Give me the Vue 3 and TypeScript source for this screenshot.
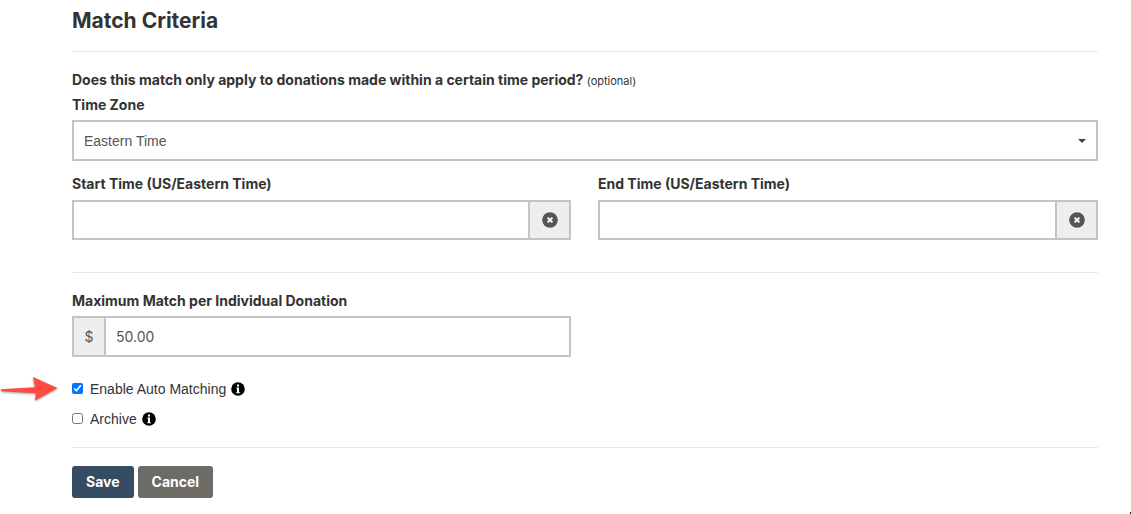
<script setup lang="ts">
import { ref } from 'vue'

const timeZone = ref('Eastern Time')
const startTime = ref('')
const endTime = ref('')
const maximum = ref('50.00')
const autoMatching = ref(true)
const archived = ref(false)
</script>

<template>
  <form class="criteria" @submit.prevent>
    <h2 class="title">Match Criteria</h2>
    <hr />

    <section class="period">
      <p class="question">
        Does this match only apply to donations made within a certain time period?
        <small>(optional)</small>
      </p>
      <label class="label" for="zone">Time Zone</label>
      <div class="control select-control">
        <select id="zone" v-model="timeZone">
          <option>Eastern Time</option>
          <option>Central Time</option>
          <option>Mountain Time</option>
          <option>Pacific Time</option>
        </select>
        <svg class="caret" viewBox="0 0 8 4" aria-hidden="true"><path d="M0 0h8L4 4z" /></svg>
      </div>

      <div class="columns">
        <div>
          <label class="label" for="start">Start Time (US/Eastern Time)</label>
          <div class="control date-control">
            <input id="start" v-model="startTime" type="text" />
            <button class="clear" type="button" aria-label="Clear start time" @click="startTime = ''">
              <svg viewBox="0 0 16 16"><circle cx="8" cy="8" r="7.8" /><path d="M5.600 5.600l4.800 4.800M10.400 5.600l-4.800 4.800" /></svg>
            </button>
          </div>
        </div>
        <div>
          <label class="label" for="end">End Time (US/Eastern Time)</label>
          <div class="control date-control">
            <input id="end" v-model="endTime" type="text" />
            <button class="clear" type="button" aria-label="Clear end time" @click="endTime = ''">
              <svg viewBox="0 0 16 16"><circle cx="8" cy="8" r="7.8" /><path d="M5.600 5.600l4.800 4.800M10.400 5.600l-4.800 4.800" /></svg>
            </button>
          </div>
        </div>
      </div>
    </section>
    <hr />

    <section class="limits">
      <div class="columns">
        <div>
          <label class="label" for="maximum">Maximum Match per Individual Donation</label>
          <div class="control">
            <span class="currency">$</span>
            <input id="maximum" v-model="maximum" type="text" />
          </div>
        </div>
      </div>

      <div class="check">
        <svg class="arrow" viewBox="0 0 60 32" aria-hidden="true">
          <path d="M1 14.300L35 12.200 33 2 57.500 13 35 25.500 36 18.300 2 16.200Q0 15.400 1 14.300z" />
        </svg>
        <label><input v-model="autoMatching" type="checkbox" />Enable Auto Matching</label>
        <svg class="info" viewBox="0 0 14 14" aria-hidden="true"><circle cx="7" cy="7" r="6.800" /><path d="M6 2.500h2v2H6zM5.300 5.500H8v4.700h.8v1H5.300v-1H6V6.500h-.7z" /></svg>
      </div>
      <div class="check">
        <label><input v-model="archived" type="checkbox" />Archive</label>
        <svg class="info" viewBox="0 0 14 14" aria-hidden="true"><circle cx="7" cy="7" r="6.800" /><path d="M6 2.500h2v2H6zM5.300 5.500H8v4.700h.8v1H5.300v-1H6V6.500h-.7z" /></svg>
      </div>
    </section>
    <hr />

    <div class="actions">
      <button class="action save" type="submit">Save</button>
      <button class="action cancel" type="button">Cancel</button>
    </div>
    <span class="corner" aria-hidden="true"></span>
  </form>
</template>

<style>
body {
  background: #fff;
}
</style>

<style scoped>
.criteria {
  padding: 9px 33px 16px 72px;
  color: #333;
  font: 14px/24px Inter, "Liberation Sans", sans-serif;
}

.criteria * {
  box-sizing: border-box;
}

.title {
  margin: 0 0 18px;
  font-size: 21px;
  font-weight: 700;
  line-height: 24px;
}

hr {
  height: 1px;
  margin: 0;
  border: 0;
  background: #eaeaea;
}

.period {
  padding: 16px 0 32px;
}

.question {
  margin: 0;
  font-weight: 700;
}

.question small {
  font-size: 11px;
  font-weight: 400;
}

.label {
  display: block;
  margin-bottom: 3px;
  font-weight: 700;
}

.control {
  display: flex;
  position: relative;
  height: 41px;
  border: 2px solid #c4c4c4;
  background: #fff;
}

.date-control {
  height: 40px;
  margin-top: 4px;
}

.control input,
.control select {
  flex: 1;
  min-width: 0;
  padding: 0 10px;
  border: 0;
  outline: 0;
  appearance: none;
  background: transparent;
  color: #555;
  font: inherit;
}

.control select {
  font-family: "Liberation Sans", sans-serif;
}

.caret {
  position: absolute;
  top: 17px;
  right: 10px;
  width: 8px;
  height: 4px;
  fill: #444;
  pointer-events: none;
}

.select-control {
  margin-bottom: 11px;
}

.columns {
  display: grid;
  grid-template-columns: 499fr 500fr;
  gap: 27px;
}

.clear {
  display: grid;
  place-items: center;
  width: 41px;
  padding: 0;
  border: 0;
  border-left: 2px solid #c4c4c4;
  background: #eee;
}

.clear svg {
  width: 16px;
  height: 16px;
  fill: #555;
}

.clear path {
  stroke: #fff;
  stroke-width: 2;
}

.currency {
  width: 32px;
  border-right: 2px solid #c4c4c4;
  background: #eee;
  color: #555;
  line-height: 37px;
  text-align: center;
}

.limits {
  padding: 16px 0 13px;
}

.limits .columns {
  margin-bottom: 17px;
}

.check {
  display: flex;
  position: relative;
  align-items: center;
  gap: 5px;
  height: 30px;
  font-family: "Liberation Sans", sans-serif;
}

.check label {
  display: flex;
  align-items: center;
}

.check input {
  width: 11px;
  height: 11px;
  margin: 0 7px 2px 0;
  accent-color: #0075ff;
}

.info {
  width: 14px;
  height: 14px;
}

.info path {
  fill: #fff;
}

.arrow {
  position: absolute;
  top: 1px;
  left: -72px;
  width: 60px;
  height: 32px;
  fill: #ff4b42;
  filter: drop-shadow(0 1px 1px #0006);
}

.actions {
  display: flex;
  gap: 4px;
  padding-top: 18px;
}

.action {
  height: 32px;
  padding: 0 14px;
  border: 0;
  border-radius: 3px;
  color: #fff;
  font: inherit;
  font-weight: 700;
}

.save {
  background: #364c63;
}

.cancel {
  background: #6d6b65;
}

.corner {
  position: fixed;
  right: 0;
  bottom: 0;
  width: 1px;
  height: 2px;
  background: #222;
}
</style>
